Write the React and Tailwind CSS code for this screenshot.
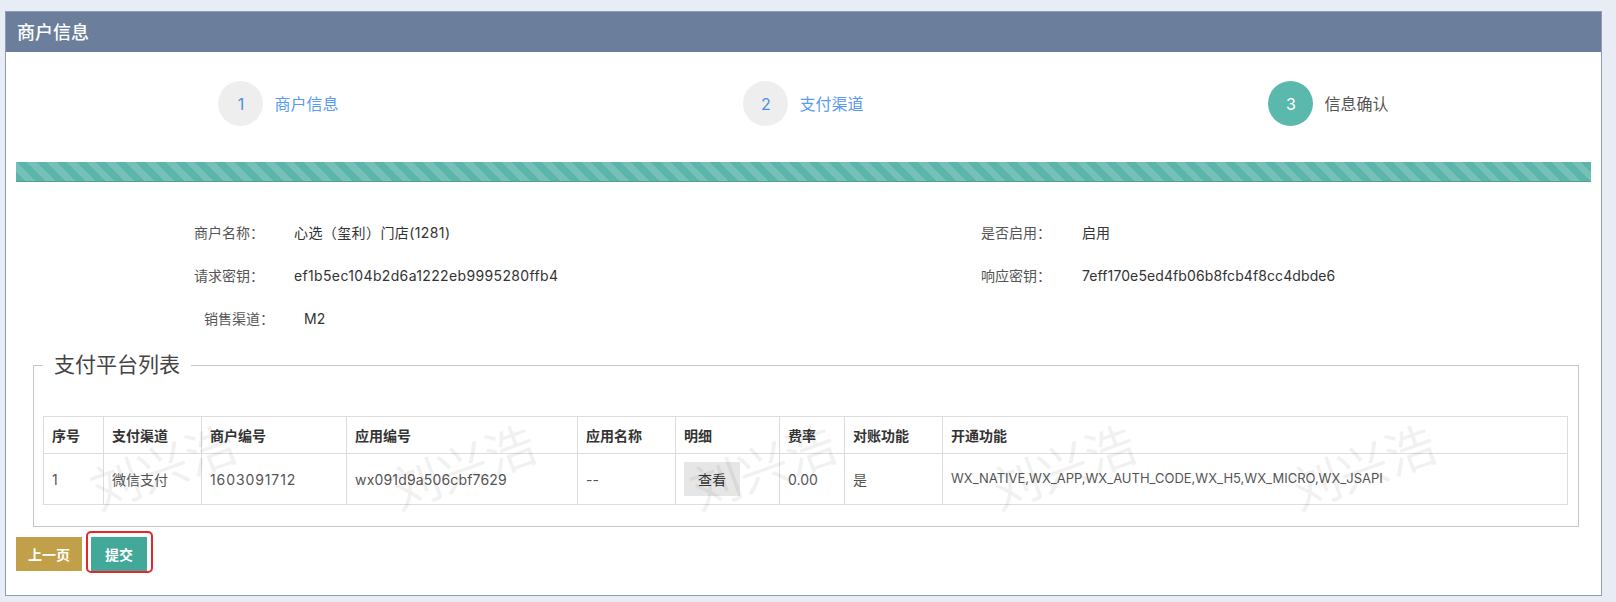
const FONT = "font-['Inter','Noto_Sans_CJK_SC',sans-serif]";

const STEPS = [
  { n: 1, label: '商户信息', done: true },
  { n: 2, label: '支付渠道', done: true },
  { n: 3, label: '信息确认', active: true },
];

const COLS = [
  { title: '序号', w: 60 },
  { title: '支付渠道', w: 98 },
  { title: '商户编号', w: 145 },
  { title: '应用编号', w: 231 },
  { title: '应用名称', w: 98 },
  { title: '明细', w: 104 },
  { title: '费率', w: 65 },
  { title: '对账功能', w: 98 },
  { title: '开通功能' },
];

// watermark centres, page coords
const WATERMARKS = [163, 463, 763, 1063, 1363];

function Step({ n, label, active }) {
  return (
    <div className="flex items-center justify-center gap-[11px]">
      <span
        className={
          active
            ? 'flex h-[45px] w-[45px] items-center justify-center rounded-full bg-[#5bb8ac] text-[16px] text-white'
            : 'flex h-[45px] w-[45px] items-center justify-center rounded-full bg-[#eeeeee] text-[16px] text-[#4a8fe6]'
        }
      >
        {n}
      </span>
      <span className={active ? 'text-[16px] text-[#555]' : 'text-[16px] text-[#5b9cf2]'}>{label}</span>
    </div>
  );
}

export default function App() {
  return (
    <div className={`relative min-h-[602px] bg-[#e8ecf4] pt-[11px] pr-[14px] pb-[6px] pl-[5px] ${FONT}`}>
      <div className="border border-[#8e9cb6] bg-white">
        {/* header */}
        <div className="flex h-[40px] items-center bg-[#6b7f9d] px-[11px] text-[18px] font-medium text-white">
          商户信息
        </div>

        <div className="px-[10px]">
          {/* steps */}
          <div className="grid grid-cols-3 pt-[29px]">
            {STEPS.map((s) => (
              <Step key={s.n} {...s} />
            ))}
          </div>

          {/* progress */}
          <div className="mt-[36px] h-[20px] border-b border-[#4e9f94] bg-[#5bb5aa] bg-[repeating-linear-gradient(45deg,transparent_0px,transparent_7px,rgba(255,255,255,0.16)_7px,rgba(255,255,255,0.16)_14px)]" />

          {/* merchant info */}
          <div className="pt-[29px] text-[14px]">
            <div className="flex h-[43px] items-center">
              <div className="flex w-[965px] pl-[178px]">
                <span className="w-[100px] text-[#555]">商户名称：</span>
                <span className="tracking-[0.4px] text-[#333]">心选（玺利）门店(1281)</span>
              </div>
              <span className="w-[101px] text-[#555]">是否启用：</span>
              <span className="text-[#333]">启用</span>
            </div>
            <div className="flex h-[43px] items-center">
              <div className="flex w-[965px] pl-[178px]">
                <span className="w-[100px] text-[#555]">请求密钥：</span>
                <span className="tracking-[0.35px] text-[#333]">ef1b5ec104b2d6a1222eb9995280ffb4</span>
              </div>
              <span className="w-[101px] text-[#555]">响应密钥：</span>
              <span className="tracking-[0.1px] text-[#333]">7eff170e5ed4fb06b8fcb4f8cc4dbde6</span>
            </div>
            <div className="flex h-[43px] items-center pl-[188px]">
              <span className="w-[100px] text-[#555]">销售渠道：</span>
              <span className="text-[#333]">M2</span>
            </div>
          </div>

          {/* platform list */}
          <fieldset className="mt-[14px] mr-[12px] ml-[17px] border border-[#c4c7cc] pr-[10px] pb-[21px] pl-[9px]">
            <legend className="px-[11px] text-[21px] leading-[22px] text-[#444]">支付平台列表</legend>
            <table className="mt-[40px] w-full table-fixed border-collapse text-[14px]">
              <colgroup>
                {COLS.map((c) => (
                  <col key={c.title} style={c.w ? { width: c.w } : undefined} />
                ))}
              </colgroup>
              <thead>
                <tr className="h-[37px]">
                  {COLS.map((c) => (
                    <th key={c.title} className="border border-[#dddddd] px-[8px] text-left font-semibold text-[#333]">
                      {c.title}
                    </th>
                  ))}
                </tr>
              </thead>
              <tbody>
                <tr className="h-[51px] text-[#555]">
                  <td className="border border-[#dddddd] px-[8px]">1</td>
                  <td className="border border-[#dddddd] px-[8px]">微信支付</td>
                  <td className="border border-[#dddddd] px-[8px] tracking-[0.9px]">1603091712</td>
                  <td className="border border-[#dddddd] px-[8px] tracking-[0.17px]">wx091d9a506cbf7629</td>
                  <td className="border border-[#dddddd] px-[8px]">--</td>
                  <td className="border border-[#dddddd] px-[8px]">
                    <button className="h-[34px] w-[56px] bg-[#e6e6e6] text-[14px] text-[#333]">查看</button>
                  </td>
                  <td className="border border-[#dddddd] px-[8px]">0.00</td>
                  <td className="border border-[#dddddd] px-[8px]">是</td>
                  <td className="border border-[#dddddd] px-[8px] text-[13px]">
                    WX_NATIVE,WX_APP,WX_AUTH_CODE,WX_H5,WX_MICRO,WX_JSAPI
                  </td>
                </tr>
              </tbody>
            </table>
          </fieldset>

          {/* actions */}
          <div className="mt-[10px] flex gap-[9px] pb-[24px]">
            <button className="h-[34px] w-[66px] bg-[#c1a049] text-[14px] font-semibold text-white">上一页</button>
            <div className="relative">
              <button className="h-[34px] w-[56px] bg-[#42a899] text-[14px] font-semibold text-white">提交</button>
              <span className="pointer-events-none absolute -top-[6px] -left-[5px] h-[42px] w-[67px] rounded-[5px] border-2 border-[#e5262b]" />
            </div>
          </div>
        </div>
      </div>

      {/* watermark */}
      {WATERMARKS.map((x) => (
        <span
          key={x}
          className="pointer-events-none absolute top-[468px] -translate-x-1/2 -translate-y-1/2 -rotate-[20deg] text-[50px] leading-none whitespace-nowrap text-black/[0.055] select-none"
          style={{ left: x }}
        >
          刘兴浩
        </span>
      ))}
    </div>
  );
}
